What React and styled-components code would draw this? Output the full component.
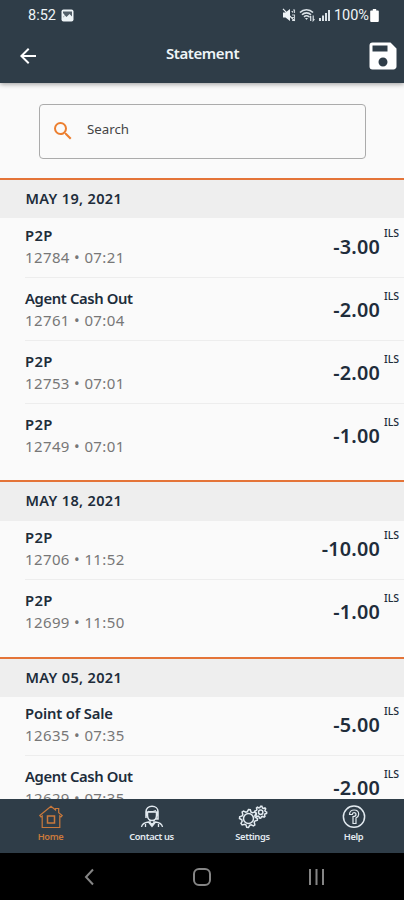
import React from 'react';
import styled, { createGlobalStyle } from 'styled-components';
import { MdArrowBack, MdSave, MdSearch } from 'react-icons/md';

const GlobalStyle = createGlobalStyle`
  * {
    box-sizing: border-box;
  }
  body {
    margin: 0;
    background: #fafafa;
    font-family: "Noto Sans", "Open Sans", sans-serif;
    color: #202c3a;
  }
`
const Screen = styled.div`
  display: flex;
  flex-direction: column;
  width: 404px;
  height: 900px;
  overflow: hidden;
`
const Header = styled.header`
  flex: none;
  height: 83px;
  background: #2f3d48;
  color: #eef4f7;
  box-shadow: 0 1px 5px rgba(0, 0, 0, 0.4);
  z-index: 1;
`
const StatusBar = styled.div`
  display: flex;
  align-items: center;
  justify-content: space-between;
  height: 30px;
  padding: 0 25px 0 28px;
  font-family: Roboto, sans-serif;
  font-size: 14.5px;
`
const StatusGroup = styled.div`
  display: flex;
  align-items: center;
  gap: ${props => props.$gap}px;
`
const Toolbar = styled.div`
  display: grid;
  grid-template-columns: 36px 1fr 36px;
  align-items: center;
  height: 52px;
  padding: 0 3px 0 16px;
`
const IconButton = styled.button`
  display: flex;
  padding: 0;
  border: 0;
  background: none;
  color: #fff;
  font-size: ${props => props.$size}px;
`
const Title = styled.h1`
  margin: 0;
  padding: 0 12px 6px 0;
  text-align: center;
  font-size: 15px;
  font-weight: 600;
  line-height: 20px;
  letter-spacing: -0.4px;
`
const Content = styled.main`
  flex: 1;
  min-height: 0;
  overflow: hidden;
`
const SearchBox = styled.div`
  display: flex;
  align-items: center;
  gap: 12px;
  height: 55px;
  margin: 20.5px 38px 19.5px 39px;
  padding: 0 0 4px 11px;
  border: 1px solid #ababab;
  border-radius: 4px;
  font-size: 13.3px;
  color: #444;

  svg {
    font-size: 24px;
    color: #ec7f30;
    margin-top: 3px;
  }
`
const DaySection = styled.section`
  padding-bottom: 13.4px;
  border-top: 2px solid #e47438;
`
const DayTitle = styled.h2`
  height: 38.4px;
  margin: 0 0 -3.5px;
  padding-left: 25.5px;
  background: #eee;
  font-size: 14.5px;
  font-weight: 600;
  line-height: 37px;
  letter-spacing: 0.35px;
`
const Row = styled.div`
  display: flex;
  justify-content: space-between;
  height: 63px;
  margin-left: 25px;
  padding: 9px 4px 0 0;
  border-bottom: 1px solid #ededed;

  &:last-child {
    border-bottom-color: transparent;
  }
`
const RowName = styled.div`
  font-size: 14.8px;
  font-weight: 600;
  line-height: 22px;
  letter-spacing: ${props => props.$spacing}px;
`
const RowInfo = styled.div`
  font-size: 15px;
  line-height: 22px;
  letter-spacing: 0.38px;
  color: #777;
`
const Amount = styled.div`
  display: flex;
  gap: 4px;
  font-size: 19.8px;
  font-weight: 600;
  line-height: 45px;
  letter-spacing: 0.2px;
`
const Currency = styled.span`
  width: 16px;
  font-size: 10.5px;
  font-weight: 500;
  line-height: 19px;
  letter-spacing: 0;
`
const TabBar = styled.nav`
  display: grid;
  grid-template-columns: repeat(4, 101px);
  flex: none;
  height: 54.5px;
  background: #2f3d48;
`
const TabItem = styled.div`
  display: flex;
  flex-direction: column;
  align-items: center;
  padding-top: 5px;
  color: ${props => props.$active ? '#c9793c' : '#e2eaf0'};
  font-size: 9.3px;
  font-weight: 600;
  line-height: 13px;
  letter-spacing: -0.35px;

  svg {
    display: block;
    fill: none;
    stroke: currentColor;
    stroke-width: 1.5;
  }
`
const SystemBar = styled.div`
  display: flex;
  flex: none;
  align-items: center;
  height: 47px;
  padding-left: 83px;
  gap: 96px;
  background: #000;

  svg {
    fill: none;
    stroke: #858585;
    stroke-width: 2;
  }
`

const days = [
  {
    date: 'MAY 19, 2021',
    items: [
      { name: 'P2P', id: '12784', time: '07:21', amount: '-3.00', spacing: 0.4 },
      { name: 'Agent Cash Out', id: '12761', time: '07:04', amount: '-2.00', spacing: -0.38 },
      { name: 'P2P', id: '12753', time: '07:01', amount: '-2.00', spacing: 0.4 },
      { name: 'P2P', id: '12749', time: '07:01', amount: '-1.00', spacing: 0.4 },
    ],
  },
  {
    date: 'MAY 18, 2021',
    items: [
      { name: 'P2P', id: '12706', time: '11:52', amount: '-10.00', spacing: 0.4 },
      { name: 'P2P', id: '12699', time: '11:50', amount: '-1.00', spacing: 0.4 },
    ],
  },
  {
    date: 'MAY 05, 2021',
    items: [
      { name: 'Point of Sale', id: '12635', time: '07:35', amount: '-5.00', spacing: -0.15 },
      { name: 'Agent Cash Out', id: '12629', time: '07:35', amount: '-2.00', spacing: -0.38 },
    ],
  },
];

const PictureIcon = () => (
  <svg width="13" height="13" viewBox="0 0 13 13">
    <rect x="0.5" y="0.5" width="12" height="12" rx="2" fill="#eef4f7" />
    <path d="M2 2.5h9v5L8.5 5 5.5 8 4 6.5 2 8.5z" fill="#54616b" />
    <path d="M2 4l2 2.5L2 8z" fill="#eef4f7" />
  </svg>
)

const MuteIcon = () => (
  <svg width="14" height="14" viewBox="0 0 14 14" fill="#eef4f7">
    <path d="M1 4.5h2.5L8 1v12L3.5 9.5H1z" />
    <path d="M9.5 3.5h1.2v1.2M11 2h1.5v3M10 7h2.5v5.5H10M10 9.5h2" fill="none" stroke="#c6ced4" strokeWidth="1.1" />
    <path d="M1 .8l11.5 12" stroke="#eef4f7" strokeWidth="1.2" />
  </svg>
)

const WifiIcon = () => (
  <svg width="16" height="14" viewBox="0 0 16 14" fill="none" stroke="#dbe3e8" strokeWidth="1.6">
    <path d="M1 4.5c3.5-3.7 9.5-3.7 13 0M3 6.7c2.5-2.5 6.5-2.5 9 0M5 8.8c1.5-1.3 3.5-1.3 5 0" />
    <path d="M6 10h3l-1.5 2z" fill="#dbe3e8" stroke="none" />
    <path d="M11.7 8v5M10.5 9.3l1.2-1.4M14.2 7.5v5l1.2-1.4" strokeWidth="1.2" />
  </svg>
)

const SignalIcon = () => (
  <svg width="13" height="12" viewBox="0 0 13 12" fill="#dbe3e8">
    <rect x="1" y="9" width="2" height="3" />
    <rect x="4" y="6.5" width="2" height="5.5" />
    <rect x="7" y="4" width="2" height="8" />
    <rect x="10" y="1" width="2" height="11" />
  </svg>
)

const BatteryIcon = () => (
  <svg width="9" height="13" viewBox="0 0 9 13" fill="#fff">
    <path d="M2.8 0h3.4v1.5H8a.8.8 0 0 1 .8.8v9.7a1 1 0 0 1-1 1H1.2a1 1 0 0 1-1-1V2.3a.8.8 0 0 1 .8-.8h1.8z" />
  </svg>
)

const HomeIcon = () => (
  <svg width="26" height="26" viewBox="0 0 26 26">
    <path d="M1.8 11.5L13 2.3l4.5 3.7V4.5h3.2v4.2l3.5 2.8-1.2 1.5-1.2-1v11.5H4.2V12L3 13z" strokeWidth="1.2" />
    <rect x="9.5" y="12" width="7" height="7" />
  </svg>
)

const ContactIcon = () => (
  <svg width="26" height="26" viewBox="0 0 26 26">
    <path d="M7 14V7.5C7 4.5 9.5 2.3 13 2.3s6 2.2 6 5.2V15h-3M8.5 8h9v3.5c0 3-2 5-4.5 5s-4.5-2-4.5-5z" />
    <path d="M9 7.5c3 .6 5.5 0 8-1M11 16v2.5l2 2 2-2V16M2.5 23c.5-3 3-4.5 7-5l3.5 4.5 3.5-4.5c4 .5 6.5 2 7 5M6.5 20v3M19.5 20v3" strokeWidth="1.3" />
  </svg>
)

const gearPath = (cx, cy, r, teeth) => {
  const points = [];
  for (let i = 0; i < teeth * 4; i++) {
    const radius = i % 4 < 2 ? r : r * 0.76;
    const angle = (i / (teeth * 4)) * Math.PI * 2;
    points.push(`${(cx + radius * Math.cos(angle)).toFixed(2)} ${(cy + radius * Math.sin(angle)).toFixed(2)}`);
  }
  return `M${points.join('L')}z`;
}

const SettingsIcon = () => (
  <svg width="30" height="26" viewBox="0 0 30 26">
    <path d={gearPath(10.5, 14.5, 9, 8)} />
    <circle cx="10.5" cy="14.5" r="5" />
    <path d={gearPath(22.7, 8.2, 6, 8)} />
    <circle cx="22.7" cy="8.2" r="2.2" />
  </svg>
)

const HelpIcon = () => (
  <svg width="26" height="26" viewBox="0 0 26 26">
    <circle cx="13" cy="12.7" r="10.6" />
    <path d="M8.5 10.5c0-3 2-4.5 4.6-4.5s4.6 1.7 4.6 4.3c0 2-1.2 3-2.7 3.7v5.5h-3V12.5c2 0 3-.7 3-2s-.8-1.9-1.9-1.9-1.8.7-1.8 1.9z" strokeWidth="1.2" />
  </svg>
)

const tabs = [
  { label: 'Home', Icon: HomeIcon, active: true },
  { label: 'Contact us', Icon: ContactIcon },
  { label: 'Settings', Icon: SettingsIcon },
  { label: 'Help', Icon: HelpIcon },
];

const Day = ({ date, items }) => (
  <DaySection>
    <DayTitle>{date}</DayTitle>
    {items.map((item) => (
      <Row key={item.id}>
        <div>
          <RowName $spacing={item.spacing}>{item.name}</RowName>
          <RowInfo>{item.id} • {item.time}</RowInfo>
        </div>
        <Amount>
          {item.amount}
          <Currency>ILS</Currency>
        </Amount>
      </Row>
    ))}
  </DaySection>
)

const App = () => (
  <Screen>
    <GlobalStyle />
    <Header>
      <StatusBar>
        <StatusGroup $gap={5}>
          8:52
          <PictureIcon />
        </StatusGroup>
        <StatusGroup $gap={3}>
          <MuteIcon />
          <WifiIcon />
          <SignalIcon />
          <StatusGroup $gap={1}>
            100%
            <BatteryIcon />
          </StatusGroup>
        </StatusGroup>
      </StatusBar>
      <Toolbar>
        <IconButton $size={24} aria-label="Back"><MdArrowBack /></IconButton>
        <Title>Statement</Title>
        <IconButton $size={36} aria-label="Save"><MdSave /></IconButton>
      </Toolbar>
    </Header>
    <Content>
      <SearchBox>
        <MdSearch />
        Search
      </SearchBox>
      {days.map((day) => <Day key={day.date} {...day} />)}
    </Content>
    <TabBar>
      {tabs.map(({ label, Icon, active }) => (
        <TabItem key={label} $active={active}>
          <Icon />
          {label}
        </TabItem>
      ))}
    </TabBar>
    <SystemBar>
      <svg width="12" height="18" viewBox="0 0 12 18"><path d="M10 1.5L3 9l7 7.5" /></svg>
      <svg width="21" height="18" viewBox="0 0 21 18"><rect x="3" y="1" width="16" height="16" rx="5" /></svg>
      <svg width="18" height="18" viewBox="0 0 18 18"><path d="M2 1v16M8.5 1v16M15 1v16" /></svg>
    </SystemBar>
  </Screen>
)

export default App;
